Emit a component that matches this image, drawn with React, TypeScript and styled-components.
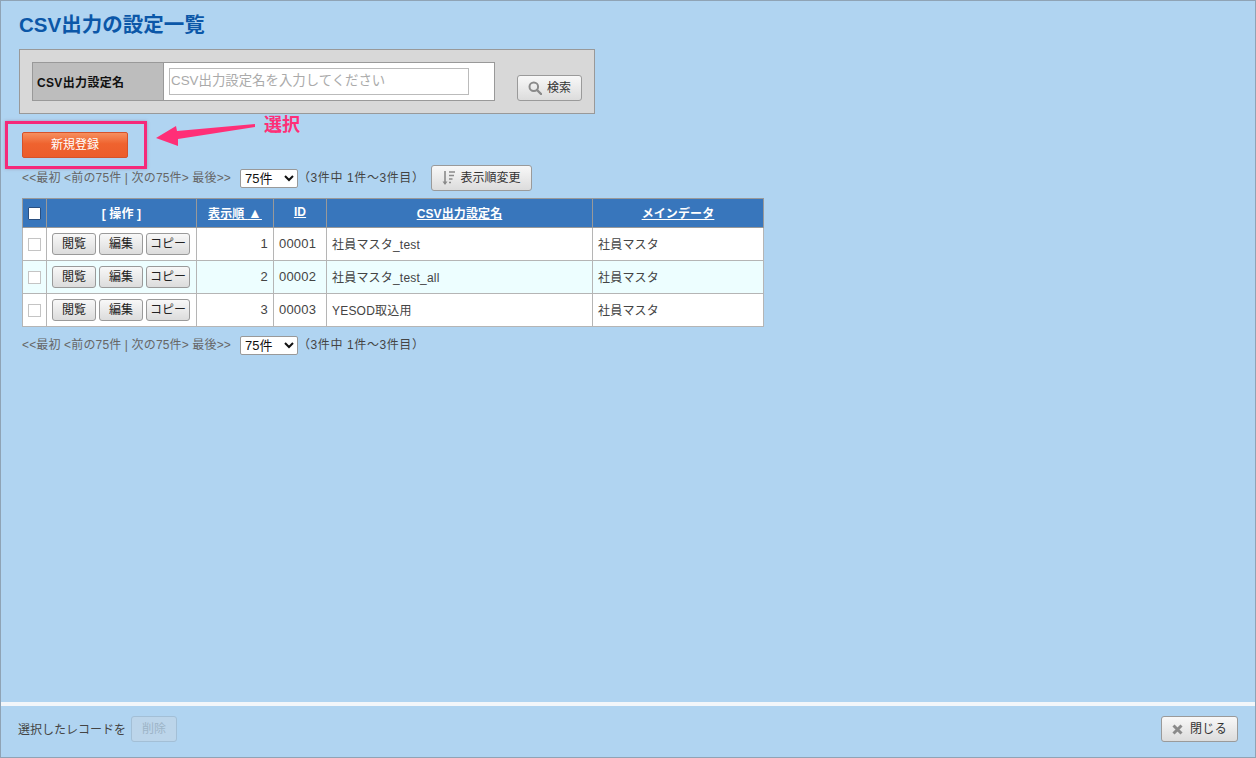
import * as React from "react";

import styled, { createGlobalStyle } from "styled-components";

const SANS = `"Liberation Sans", "Noto Sans CJK JP", sans-serif`;

const GlobalStyle = createGlobalStyle`
  html, body {
    margin: 0;
    padding: 0;
    background: #b0d4f1;
  }
  * {
    box-sizing: border-box;
  }
`;

const rows = [
  { order: 1, id: "00001", name: "社員マスタ_test", main: "社員マスタ" },
  { order: 2, id: "00002", name: "社員マスタ_test_all", main: "社員マスタ" },
  { order: 3, id: "00003", name: "YESOD取込用", main: "社員マスタ" }
];

const Pager = () => (
  <PagerText>
    &lt;&lt;最初 &lt;前の75件 | 次の75件&gt; 最後&gt;&gt;
  </PagerText>
);

const PageSelect = () => (
  <Select defaultValue="75">
    <option value="75">75件</option>
  </Select>
);

export default function App() {
  return (
    <Page>
      <GlobalStyle />
      <Content>
        <Title>CSV出力の設定一覧</Title>
        <SearchPanel>
          <SearchTable>
            <SearchLabel>CSV出力設定名</SearchLabel>
            <SearchField>
              <SearchInput placeholder="CSV出力設定名を入力してください" />
            </SearchField>
          </SearchTable>
          <SearchButton>
            <svg width="14" height="14" viewBox="0 0 14 14" fill="none">
              <circle cx="5.8" cy="5.8" r="4.3" stroke="#8a8a8a" strokeWidth="2" />
              <path d="M9 9l4 4" stroke="#8a8a8a" strokeWidth="2.4" strokeLinecap="round" />
            </svg>
            <ButtonLabel>検索</ButtonLabel>
          </SearchButton>
        </SearchPanel>

        <ActionRow>
          <PrimaryButton>新規登録</PrimaryButton>
          <Highlight />
          <Arrow width="100" height="24" viewBox="0 0 100 24">
            <path d="M0 15L20 3L21 8L99 1L99 4L22 16L22 23Z" fill="#ff2f77" />
          </Arrow>
          <Callout>選択</Callout>
        </ActionRow>

        <PagerRow>
          <Pager />
          <PageSelect />
          <Count>（3件中 1件～3件目）</Count>
          <GreyButton $width={101}>
            <svg width="14" height="16" viewBox="0 0 14 16" fill="none">
              <path d="M3 1v13" stroke="#8a8a8a" strokeWidth="1.6" />
              <path d="M0.5 11.5L3 15l2.5-3.5z" fill="#8a8a8a" />
              <path
                d="M7 2h6M7 5.5h5M7 9h3.5M7 12.5h2"
                stroke="#8a8a8a"
                strokeWidth="1.6"
              />
            </svg>
            <ButtonLabel>表示順変更</ButtonLabel>
          </GreyButton>
        </PagerRow>

        <Table>
          <colgroup>
            <col width={24} />
            <col width={150} />
            <col width={77} />
            <col width={53} />
            <col width={266} />
            <col width={171} />
          </colgroup>
          <thead>
            <tr>
              <Th>
                <HeadCheck />
              </Th>
              <Th>[ 操作 ]</Th>
              <Th>
                <u>
                  表示順 <SortMark>▲</SortMark>
                </u>
              </Th>
              <Th>
                <u>ID</u>
              </Th>
              <Th>
                <u>CSV出力設定名</u>
              </Th>
              <Th>
                <u>メインデータ</u>
              </Th>
            </tr>
          </thead>
          <tbody>
            {rows.map((row, i) => (
              <Row key={row.id} $striped={i === 1}>
                <Td $center>
                  <RowCheck />
                </Td>
                <Td $center>
                  <Actions>
                    <RowButton>閲覧</RowButton>
                    <RowButton>編集</RowButton>
                    <RowButton>コピー</RowButton>
                  </Actions>
                </Td>
                <Td $right>{row.order}</Td>
                <Td>{row.id}</Td>
                <Td $small>{row.name}</Td>
                <Td $small>{row.main}</Td>
              </Row>
            ))}
          </tbody>
        </Table>

        <BottomPager>
          <Pager />
          <PageSelect />
          <Count>（3件中 1件～3件目）</Count>
        </BottomPager>
      </Content>

      <Footer>
        <FooterLeft>
          <FooterText>選択したレコードを</FooterText>
          <DisabledButton>削除</DisabledButton>
        </FooterLeft>
        <GreyButton $width={77} $gap={7}>
          <svg width="11" height="11" viewBox="0 0 11 11" fill="none">
            <path d="M1.5 1.5l8 8M9.5 1.5l-8 8" stroke="#8a8a8a" strokeWidth="3" />
          </svg>
          <ButtonLabel $spaced>閉じる</ButtonLabel>
        </GreyButton>
      </Footer>
    </Page>
  );
}

const Page = styled.div`
  display: flex;
  flex-direction: column;
  width: 1256px;
  height: 758px;
  border: 1px solid #8fa3b5;
  background: #b0d4f1;
  font-family: ${SANS};
  color: #333;
  overflow: hidden;
`;

const Content = styled.main`
  flex: 1;
  padding: 0 0 0 18px;
`;

const Title = styled.h1`
  margin: 0;
  padding-top: 11px;
  height: 48px;
  font-size: 20.5px;
  line-height: 26px;
  font-weight: bold;
  color: #0b57a8;
`;

const SearchPanel = styled.section`
  display: flex;
  align-items: flex-start;
  width: 576px;
  height: 65px;
  padding: 12px 12px;
  background: #d8d8d8;
  border: 1px solid #999;
`;

const SearchTable = styled.div`
  display: flex;
  width: 463px;
  height: 39px;
  border: 1px solid #999;
  background: #fff;
`;

const SearchLabel = styled.div`
  display: flex;
  align-items: center;
  width: 131px;
  padding-left: 4px;
  background: #bdbdbd;
  border-right: 1px solid #999;
  font-size: 12px;
  letter-spacing: 0.35px;
  font-weight: bold;
  color: #111;
`;

const SearchField = styled.div`
  padding: 5px;
`;

const SearchInput = styled.input`
  display: block;
  width: 300px;
  height: 27px;
  padding: 0 1px 2px;
  border: 1px solid #bbb;
  font-family: ${SANS};
  font-size: 13.4px;
  outline: none;

  &::placeholder {
    color: #aaa;
    opacity: 1;
  }
`;

const buttonFace = `
  border: 1px solid #9a9a9a;
  border-radius: 3px;
  background: linear-gradient(#f8f8f8, #dcdcdc);
  color: #333;
  font-family: ${SANS};
  cursor: pointer;
`;

const ButtonLabel = styled.span<{ $spaced?: boolean }>`
  padding-bottom: 3px;
  letter-spacing: ${(p) => (p.$spaced ? 0.4 : 0)}px;
`;

const SearchButton = styled.button`
  ${buttonFace}
  display: flex;
  align-items: center;
  justify-content: center;
  gap: 5px;
  width: 65px;
  height: 26px;
  margin: 13px 0 0 22px;
  padding: 0;
  font-size: 12px;
`;

const ActionRow = styled.div`
  position: relative;
  height: 51px;
  padding: 18px 0 0 3px;
`;

const PrimaryButton = styled.button`
  display: block;
  width: 106px;
  height: 26px;
  padding: 0 0 3px;
  border: 1px solid #d5522a;
  border-radius: 2px;
  background: linear-gradient(#f68f5e, #ef632f 45%, #ec5c2a);
  color: #fff;
  font-family: ${SANS};
  font-size: 12px;
  cursor: pointer;
`;

const Highlight = styled.div`
  position: absolute;
  left: -14px;
  top: 7px;
  width: 142px;
  height: 48px;
  border: 3px solid #f5297a;
  box-shadow: 0 0 3px rgba(120, 60, 90, 0.35);
`;

const Arrow = styled.svg`
  position: absolute;
  left: 137px;
  top: 9px;
`;

const Callout = styled.div`
  position: absolute;
  left: 245px;
  top: 0;
  font-size: 18px;
  line-height: 22px;
  font-weight: bold;
  color: #ff2f77;
`;

const PagerRow = styled.div`
  display: flex;
  align-items: center;
  height: 26px;
  padding-left: 3px;
`;

const BottomPager = styled(PagerRow)`
  height: 19px;
  margin-top: 9px;
`;

const PagerText = styled.span`
  width: 218px;
  padding-bottom: 4px;
  font-size: 12px;
  letter-spacing: 0.15px;
  color: #666;
  white-space: nowrap;
`;

const Select = styled.select`
  width: 58px;
  height: 19px;
  padding: 0;
  border: 1px solid #999;
  border-radius: 2px;
  background: #fff;
  color: #111;
  font-family: ${SANS};
  font-size: 13px;
`;

const Count = styled.span`
  width: 133px;
  padding-bottom: 4px;
  font-size: 12px;
  letter-spacing: 0.6px;
  color: #444;
  white-space: nowrap;
`;

const GreyButton = styled.button<{ $width: number; $gap?: number }>`
  ${buttonFace}
  display: flex;
  align-items: center;
  justify-content: center;
  gap: ${(p) => p.$gap ?? 4}px;
  width: ${(p) => p.$width}px;
  height: 26px;
  padding: 0;
  font-size: 12px;
`;

const Table = styled.table`
  width: 741px;
  margin: 7px 0 0 3px;
  border-collapse: collapse;
  table-layout: fixed;
  border: 1px solid #999;
  background: #fff;
`;

const Th = styled.th`
  height: 29px;
  padding: 0 0 2px;
  border: 1px solid #999;
  background: #3876bc;
  color: #fff;
  font-size: 12px;
  letter-spacing: 0.12px;
  font-weight: bold;
  text-align: center;
`;

const SortMark = styled.span`
  font-size: 14px;
`;

const Row = styled.tr<{ $striped: boolean }>`
  background: ${(p) => (p.$striped ? "#edfeff" : "#fff")};
`;

const Td = styled.td<{ $center?: boolean; $right?: boolean; $small?: boolean }>`
  height: 33px;
  padding: 0 5px ${(p) => (p.$center ? 0 : 2)}px;
  border: 1px solid #b5b5b5;
  font-size: ${(p) => (p.$small ? 12 : 13)}px;
  letter-spacing: ${(p) => (p.$center ? 0 : 0.2)}px;
  color: #444;
  text-align: ${(p) => (p.$right ? "right" : p.$center ? "center" : "left")};
`;

const HeadCheck = styled.span`
  display: block;
  width: 13px;
  height: 13px;
  margin: 2px auto 0;
  border: 1px solid #2a4f80;
  border-radius: 1px;
  background: #fff;
`;

const RowCheck = styled.span`
  display: block;
  width: 13px;
  height: 13px;
  margin: 0 auto;
  border: 1px solid #c4c4c4;
  background: #fff;
`;

const Actions = styled.div`
  display: flex;
  gap: 3px;
`;

const RowButton = styled.button`
  ${buttonFace}
  width: 44px;
  height: 22px;
  padding: 0 0 3px;
  font-size: 12px;
  color: #222;
`;

const Footer = styled.footer`
  display: flex;
  align-items: flex-start;
  justify-content: space-between;
  height: 55px;
  padding: 10px 17px 0;
  border-top: 4px solid #f2f6fa;
`;

const FooterLeft = styled.div`
  display: flex;
  align-items: center;
  gap: 5px;
  font-size: 12px;
  color: #444;
`;

const FooterText = styled.span`
  padding-bottom: 2px;
`;

const DisabledButton = styled.button`
  width: 46px;
  height: 26px;
  padding: 0 0 3px;
  border: 1px solid #a3bfd6;
  border-radius: 3px;
  background: #bcd5ea;
  color: #9db4c7;
  font-family: ${SANS};
  font-size: 12px;
`;
